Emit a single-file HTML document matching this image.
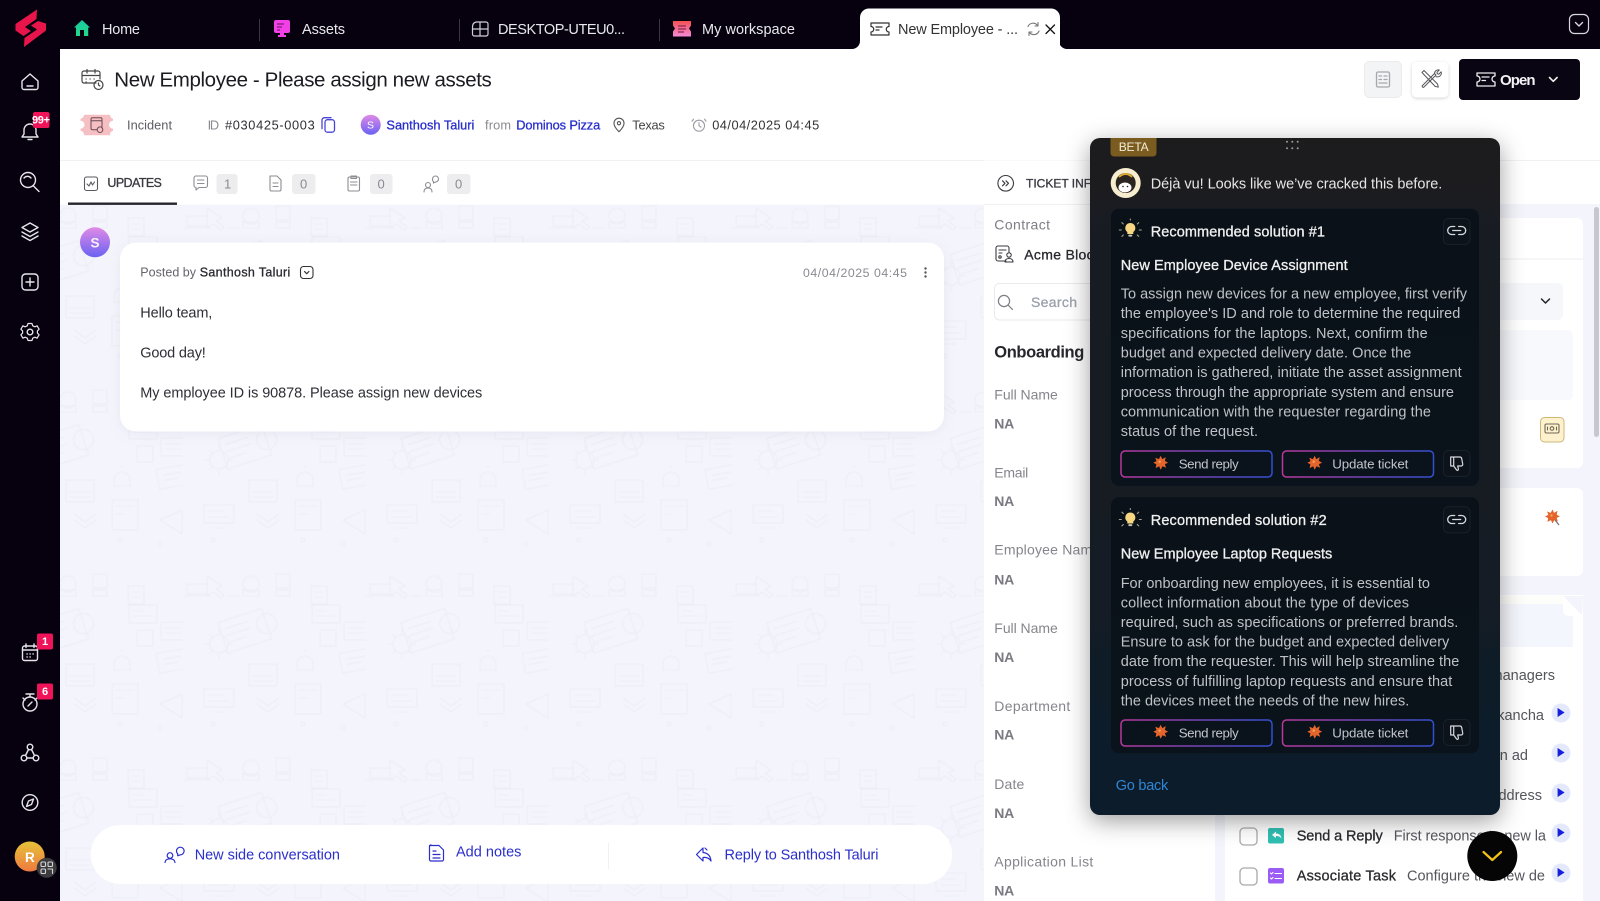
<!DOCTYPE html>
<html lang="en"><head><meta charset="utf-8"><title>New Employee - Please assign new assets</title>
<style>
html,body{margin:0;padding:0;background:#fff;overflow:hidden}
svg{display:block}
text{font-family:"Liberation Sans",sans-serif;white-space:pre}
.m{stroke:currentColor;stroke-width:.3}
.i{fill:none;stroke-linecap:round;stroke-linejoin:round}
</style></head><body>
<svg xmlns="http://www.w3.org/2000/svg" width="1600" height="901" viewBox="0 0 1600 901">
<defs>
<linearGradient id="gb" x1="0" y1="0" x2="1" y2="0"><stop offset="0" stop-color="#b8399c"/><stop offset="1" stop-color="#3350d0"/></linearGradient>
<linearGradient id="pg" x1="0" y1="0" x2="0" y2="1"><stop offset="0" stop-color="#1b1c1f"/><stop offset=".55" stop-color="#141b24"/><stop offset="1" stop-color="#0e1b2b"/></linearGradient>
<linearGradient id="cg" x1="0" y1="0" x2="0" y2="1"><stop offset="0" stop-color="#0a1118"/><stop offset="1" stop-color="#0a121b"/></linearGradient>
<linearGradient id="av" x1="0" y1="0" x2="0" y2="1"><stop offset="0" stop-color="#e08ae6"/><stop offset="1" stop-color="#6a62f2"/></linearGradient>
<linearGradient id="rv" x1="0" y1="0" x2="0" y2="1"><stop offset="0" stop-color="#e6c238"/><stop offset="1" stop-color="#ee7a40"/></linearGradient>
<linearGradient id="hm" x1="0" y1="0" x2="0" y2="1"><stop offset="0" stop-color="#18c9a0"/><stop offset="1" stop-color="#25d98a"/></linearGradient>
<linearGradient id="wk" x1="0" y1="0" x2="0" y2="1"><stop offset="0" stop-color="#f5504f"/><stop offset="1" stop-color="#f58ad8"/></linearGradient>
<filter id="sh" x="-15%" y="-15%" width="130%" height="130%"><feDropShadow dx="0" dy="6" stdDeviation="12" flood-color="#000" flood-opacity=".38"/></filter>
<filter id="ss" x="-10%" y="-20%" width="120%" height="140%"><feDropShadow dx="0" dy="2" stdDeviation="6" flood-color="#7b80a8" flood-opacity=".13"/></filter>
<filter id="sb" x="-30%" y="-30%" width="160%" height="160%"><feDropShadow dx="0" dy="1" stdDeviation="1.5" flood-color="#000" flood-opacity=".18"/></filter>
<filter id="bl"><feGaussianBlur stdDeviation=".5"/></filter>
<pattern id="bgp" x="0" y="0" width="183" height="184" patternUnits="userSpaceOnUse">
<g fill="none" stroke="#ebecf5" stroke-width="1.100">
<path d="M24 24v20l6-4 8 6 3-3-8-6 6-3z M44 44h12"/>
<rect x="4" y="32" width="20" height="10"/><path d="M0 44h28"/>
<circle cx="68" cy="32" r="8"/><path d="M60 44h16v-6h-16z"/>
<rect x="93" y="22" width="14" height="14"/><rect x="93" y="38" width="14" height="6"/>
<rect x="128" y="34" width="16" height="18"/><path d="M132 40h8M132 45h8"/>
<rect x="129" y="53" width="28" height="18"/><path d="M133 59h10M133 64h18"/>
<g transform="rotate(-18 70 75)"><rect x="38" y="60" width="46" height="32"/><path d="M43 68h24M43 75h24M43 82h18"/><circle cx="84" cy="76" r="10"/></g>
<circle cx="36" cy="92" r="9"/><path d="M36 77v5M36 102v5M22 92h5M45 92h5M26 82l4 4M46 82l-4 4M26 102l4-4M46 102l-4-4"/>
<rect x="137" y="78" width="16" height="16"/><rect x="161" y="70" width="24" height="18"/><path d="M165 76h16M165 81h16"/>
<g transform="rotate(-10 160 112)"><rect x="158" y="101" width="30" height="20"/><path d="M163 108h20M163 113h16"/></g>
<path d="M114 112a8 8 0 1 1 16 0v6h-16z M122 100v-3"/>
<rect x="66" y="112" width="28" height="22"/><path d="M70 124h20M70 129h20"/>
<rect x="112" y="132" width="26" height="30"/><path d="M116 138h18M116 146h8"/>
<rect x="21" y="137" width="30" height="18"/><path d="M26 143h16M26 149h20M30 160h12"/>
<path d="M74 146l11 8 11-8M74 152l11 8 11-8"/>
<path d="M160 152l22-10v24z"/>
<circle cx="30" cy="172" r="2"/><circle cx="120" cy="172" r="2"/><circle cx="160" cy="176" r="2"/>
</g>
</pattern>
<g id="spl"><path d="M0-7l1.600 3.400L5-5.600l-.8 3.800L7.400 0 4.200 1.400 5.400 5 1.800 3.600 0 7l-1.600-3.400L-5 5.400l.6-3.800L-7.400 0l3.200-1.600L-5.400-5l3.600 1.400z" fill="#e4652b"/><circle cx="-1" cy="-1" r="1.200" fill="#f4a15c"/></g>
<g id="bulb"><path d="M0-7a5 5 0 0 1 3 9v2h-6V2a5 5 0 0 1 3-9z" fill="#f6d680"/><rect x="-2" y="4.600" width="4" height="2" rx="1" fill="#c9c4b0"/><path d="M-9 0h-2M9 0h2M-7-6l-1.400-1.400M7-6l1.400-1.400M-7 5l-1.400 1.400M7 5l1.400 1.400M0-10v-1" stroke="#a8a28c" stroke-width="1.100" class="i"/></g>
<g id="link"><path d="M-2-4h-3a4 4 0 0 0 0 8h3M2-4h3a4 4 0 0 1 0 8H2M-4 0h8" class="i" stroke="#d7d9dd" stroke-width="1.300"/></g>
<g id="thumb"><path d="M-6-6H3a2 2 0 0 1 2 1.600L6 1a1.600 1.600 0 0 1-1.600 2H1l.7 3c.2 1-1 1.800-1.800 1L-3 3H-6z M-3-6V3" class="i" stroke="#d7d9dd" stroke-width="1.200"/></g>
<g id="play"><circle r="9.500" fill="#e4e8fb"/><path d="M-3.400-5v9l7-4.500z" fill="#1620dc"/></g>
</defs>

<!-- page canvas -->
<rect width="1600" height="901" fill="#fff"/>
<rect x="60" y="204.700" width="924" height="697" fill="#f4f5fc"/>
<rect x="60" y="204.700" width="924" height="697" fill="url(#bgp)" filter="url(#bl)"/>
<path d="M60 160.500H1600" stroke="#f1f1f4"/>

<!-- top bar -->
<rect width="1600" height="49" fill="#07010f"/>
<path d="M851 49h1a8 8 0 0 0 8-8V49zM1068 49h-1a8 8 0 0 1-8-8V49z" fill="#fff"/>
<g fill="#e8e8ec" font-size="14.500">
<text x="102" y="33.800" textLength="38">Home</text>
<text x="302" y="33.800" textLength="43">Assets</text>
<text x="498" y="33.800" textLength="127">DESKTOP-UTEU0...</text>
<text x="702" y="33.800" textLength="93">My workspace</text>
</g>
<path d="M259.500 19v22M459.500 19v22M659.500 19v22" stroke="#3a3542"/>
<g transform="translate(0,-1)">
<path d="M82 21l8 7.500h-1.800V37H76V28.500H74z" fill="url(#hm)"/><rect x="80" y="31" width="4" height="6" fill="#07010f"/>
<rect x="274" y="21" width="16" height="13" rx="2" fill="#f23fe6"/><path d="M277 25h7M277 28h5M277 31h3" stroke="#7d1f79" stroke-width="1.200"/><path d="M280 34h4v2h2v2h-8v-2h2z" fill="#f23fe6"/>
<g class="i" stroke="#cfcfd6" stroke-width="1.200"><path d="M472.500 28v7a2 2 0 0 0 2 2h11.500a2 2 0 0 0 2-2V25a2 2 0 0 0-2-2H476q-3.500 1-3.500 5zM472.500 30h15.500M480 23v14"/></g>
<path d="M673 22h18v4.500l-2 3 2 3v5h-18v-5l2-3-2-3z" fill="url(#wk)"/><path d="M678 27h8M678 30h8M678 33h6" stroke="#8a2a50" stroke-width="1.200"/>
</g>
<rect x="860" y="8.500" width="200" height="44" rx="9" fill="#fff"/>
<rect x="860" y="30" width="200" height="22" fill="#fff"/>
<path d="M871 23h18v3.500a2.500 2.500 0 0 0 0 5.500V35h-18v-3a2.500 2.500 0 0 0 0-5.500z M876 27h6M876 30h3" class="i" stroke="#333" stroke-width="1.200"/>
<text x="898" y="33.800" font-size="14.500" fill="#333" textLength="120">New Employee - ...</text>
<g transform="translate(0,-1)">
<path d="M1028 27.500a5.500 5.500 0 0 1 9.500-1M1039 32a5.500 5.500 0 0 1-9.500 1.500M1038 23.500v3.500h-3M1029 36.500V33h3" class="i" stroke="#777" stroke-width="1.100"/>
<path d="M1046 26l8.500 8.500M1054.500 26l-8.500 8.500" stroke="#111" stroke-width="1.300" stroke-linecap="round"/>
</g>
<rect x="1569.500" y="14.500" width="19" height="19" rx="5" fill="none" stroke="#d8d8de" stroke-width="1.200"/>
<path d="M1575.500 22.500l3.500 3.500 3.500-3.500" class="i" stroke="#d8d8de" stroke-width="1.400"/>

<!-- sidebar -->
<rect y="0" width="60" height="901" fill="#07010f"/>
<path d="M37 9.500L15.500 24v6.500l8 5.500 7.500-5-6-4 11.500-8zM46 23.500v7L24 47l.5-9 12.500-8.500-6-4 7-4.500z" fill="#e8154b"/>
<g class="i" stroke="#e6e6ea" stroke-width="1.400">
<path d="M22 81l8-7 8 7v6.500a2 2 0 0 1-2 2H24a2 2 0 0 1-2-2z M27 86h6"/>
<path d="M30 124a6 6 0 0 1 6 6v4l2 3H22l2-3v-4a6 6 0 0 1 6-6zM28 139.500h4"/>
<circle cx="28" cy="180" r="7.500"/><path d="M33.500 186l5.500 5.500M24 178a4.500 4.500 0 0 1 7 0"/>
<path d="M30 223l8 4.500-8 4.500-8-4.500zM22 232l8 4.500 8-4.500M22 236l8 4.500 8-4.500"/>
<rect x="22" y="274" width="16" height="16" rx="3.500"/><path d="M30 278v8M26 282h8"/>
<path d="M28 323.500h4l.7 2.300 2.200 1 2.200-1 2 3.400-1.700 1.700v2.200l1.700 1.700-2 3.400-2.200-1-2.200 1-.7 2.300h-4l-.7-2.300-2.200-1-2.200 1-2-3.400 1.700-1.700v-2.200l-1.700-1.700 2-3.400 2.200 1 2.200-1z" stroke-width="1.200"/><circle cx="30" cy="332" r="2.800"/>
<rect x="22.500" y="646" width="15" height="14.500" rx="2"/><path d="M22.500 650h15M26 644v3.500M34 644v3.500M27 654h.2M30 654h.2M33 654h.2M27 657h.2M30 657h.2"/>
<circle cx="30" cy="704" r="7"/><path d="M26 694h8M30 694v3M28 706l4-4M23 698l2 2M37 698l-2 2"/>
<circle cx="30" cy="747" r="2.800"/><circle cx="24" cy="758" r="2.800"/><circle cx="36" cy="758" r="2.800"/><path d="M27 758h6M28.500 749.500l-3 6M31.500 749.500l3 6"/>
<circle cx="30" cy="802.500" r="7.800"/><path d="M33.500 799l-2 5.500-5 2 2-5.500z"/>
</g>
<rect x="33" y="112" width="16.500" height="16" rx="2" fill="#f0135a"/><text x="32" y="123.500" font-size="11" fill="#fff" font-weight="700" textLength="18">99+</text>
<rect x="37" y="633.500" width="16" height="16" rx="2" fill="#f0135a"/><text x="42" y="645" font-size="11" fill="#fff" font-weight="700">1</text>
<rect x="37" y="683.500" width="16" height="16" rx="2" fill="#f0135a"/><text x="42" y="695" font-size="11" fill="#fff" font-weight="700">6</text>
<circle cx="29.700" cy="856.500" r="15" fill="url(#rv)"/><text x="25" y="862" font-size="13.500" fill="#fff" font-weight="700">R</text>
<circle cx="46.700" cy="867.700" r="10" fill="#3c3c3e"/>
<g class="i" stroke="#d5d5d8" stroke-width="1.100"><rect x="41" y="862" width="4.500" height="4.500" rx="1"/><rect x="48" y="862" width="4.500" height="4.500" rx="1"/><rect x="41" y="869" width="4.500" height="4.500" rx="1"/><path d="M48 869h4.500v4.500"/></g>

<!-- header -->
<g class="i" stroke="#444" stroke-width="1.200" transform="translate(0,-2)"><path d="M96 85H84a2 2 0 0 1-2-2V75a2 2 0 0 1 2-2h14a2 2 0 0 1 2 2v6M82 77.500h18M87 71.500v3.500M95 71.500v3.500M86 81h.2M90 81h.2M94 81h.2M86 84h.2"/><circle cx="98.500" cy="87" r="4.500"/><path d="M98.500 85v2l1.400 1"/></g>
<text x="114.300" y="86.500" font-size="20.500" fill="#1b1b22" textLength="377.500">New Employee - Please assign new assets</text>
<g transform="translate(0,-4.300)">
<path d="M84 119h26a4 4 0 0 0 3 4v2a4 4 0 0 0 0 8v2a4 4 0 0 0-3 4.500H84a4 4 0 0 0-3.500-4.500v-2a4 4 0 0 0 0-8v-2a4 4 0 0 0 3.500-4z" fill="#f5bfc4"/>
<g class="i" stroke="#6b4a4e" stroke-width="1"><rect x="91" y="122" width="11" height="12" rx="1.500"/><path d="M91 125h11"/><circle cx="100" cy="134" r="2.800" fill="#f5bfc4"/></g>
<g font-size="12.800">
<text x="127" y="134" fill="#5c5c64" textLength="45">Incident</text>
<text x="207.600" y="134" fill="#8a8a92" textLength="11.500">ID</text>
<text x="225" y="134" fill="#2e2e36" textLength="89.700">#030425-0003</text>
<text x="386.400" y="134" fill="#2a2fcb" textLength="88" class="m" style="color:#2a2fcb">Santhosh Taluri</text>
<text x="485" y="134" fill="#8a8a92" textLength="26">from</text>
<text x="516.200" y="134" fill="#2a2fcb" textLength="84" class="m" style="color:#2a2fcb">Dominos Pizza</text>
<text x="632.300" y="134" fill="#444" textLength="32.500">Texas</text>
<text x="712.200" y="134" fill="#333" textLength="107">04/04/2025 04:45</text>
</g>
<g class="i" stroke="#4a44d8" stroke-width="1.300"><rect x="325" y="124" width="9.500" height="12.500" rx="2.500"/><path d="M322 133v-9a3 3 0 0 1 3-2h6"/></g>
<circle cx="370.700" cy="129" r="10" fill="url(#av)"/><text x="367" y="133" font-size="10.500" fill="#fff">S</text>
<g class="i" stroke="#555" stroke-width="1.100"><path d="M619 136s-5-4.500-5-8.500a5 5 0 0 1 10 0c0 4-5 8.500-5 8.500z"/><circle cx="619" cy="127.500" r="1.600"/></g>
<g class="i" stroke="#9a9aa2" stroke-width="1.100"><circle cx="699" cy="130" r="5.500"/><path d="M699 127v3l2 1.500M693.500 123.500l-1.500 2M704.500 123.500l1.500 2"/></g>
</g>

<!-- header buttons -->
<rect x="1364.500" y="61.500" width="37" height="36" rx="5" fill="#f3f4f6" stroke="#ebebee"/>
<g class="i" stroke="#a5a7ac" stroke-width="1.300"><rect x="1376.500" y="72" width="13" height="15" rx="1.500"/><path d="M1379 76h2.500M1384 76h3M1379 79.500h2.500M1384 79.500h3M1379 83h8"/></g>
<rect x="1412" y="62" width="36.500" height="35.500" rx="5" fill="#fff" filter="url(#sb)"/>
<g class="i" stroke="#55555b" stroke-width="1"><path d="M1422.500 85.500l12-12 1.500 1.500-12 12a1 1 0 0 1-1.500-1.500zM1434.500 73.500a3.800 3.800 0 0 1 4.800-3.500l-2.300 2.300.3 1.500 1.500.3 2.300-2.300a3.800 3.800 0 0 1-5 4.800M1422 72.500l2-2 13.500 13.500.8 3.200-3.200-.8z"/></g>
<rect x="1459" y="59" width="121" height="41" rx="4" fill="#0a0512"/>
<path d="M1477 73h18v3a3 3 0 0 0 0 6v4h-18v-4a3 3 0 0 0 0-6z M1482 77h7M1482 80.500h3.500" class="i" stroke="#eee" stroke-width="1.300"/>
<text x="1500" y="85" font-size="15" fill="#f3f3f5" font-weight="700" textLength="35.500">Open</text>
<path d="M1549.500 77.500l3.800 3.800 3.800-3.800" class="i" stroke="#eee" stroke-width="1.600"/>

<!-- updates tabs -->
<g transform="translate(0,-6)">
<g class="i" stroke="#5a5a60" stroke-width="1.100">
<rect x="84.500" y="183" width="13" height="13.500" rx="2"/><path d="M87 190l2 2 2-4 1.500 3 2-3"/>
</g>
<text x="107.400" y="193" font-size="12.500" fill="#3a3a42" textLength="54.500" class="m" style="color:#3a3a42">UPDATES</text>
<g class="i" stroke="#8c8c92" stroke-width="1.100">
<path d="M194 184a2 2 0 0 1 2-2h9.500a2 2 0 0 1 2 2v7.500a2 2 0 0 1-2 2H199l-3 2.500v-2.500a2 2 0 0 1-2-2zM197.500 186h6.500M197.500 189.500h6.500"/>
<path d="M270 182h7l4 4v9.500a1.500 1.500 0 0 1-1.500 1.500H271.500a1.500 1.500 0 0 1-1.500-1.500zM273 189h5M273 192.500h5"/>
<rect x="348" y="183" width="11.500" height="14" rx="1.500"/><path d="M351 182h5.500v2.500H351zM350.500 188h6.500M350.500 191h6.500"/>
<circle cx="428" cy="191" r="2.500"/><path d="M424 198c0-2.500 1.500-4 4-4s4 1.500 4 4"/><path d="M432.500 185a3 3 0 1 1 3 3l-2 1v-1.300a3 3 0 0 1-1-2.700z"/>
</g>
<g fill="#ededef"><rect x="216.500" y="180" width="21" height="20" rx="3"/><rect x="292" y="180" width="23.500" height="20" rx="3"/><rect x="370" y="180" width="22.500" height="20" rx="3"/><rect x="447" y="180" width="23.500" height="20" rx="3"/></g>
<g font-size="13" fill="#8a8a90"><text x="224" y="194.500">1</text><text x="300" y="194.500">0</text><text x="377.500" y="194.500">0</text><text x="455" y="194.500">0</text></g>
</g>
<rect x="68" y="202.500" width="109" height="2.400" fill="#26262c"/>

<!-- message -->
<rect x="120" y="242.500" width="824" height="189" rx="16" fill="#fff" filter="url(#ss)"/>
<circle cx="95" cy="242.300" r="15" fill="url(#av)"/><text x="90.500" y="247.500" font-size="13.500" fill="#fff" font-weight="700" opacity=".9">S</text>
<text x="140.300" y="276.700" font-size="12.500" fill="#63636b" textLength="55.700">Posted by</text>
<text x="199.700" y="276.700" font-size="12.500" fill="#2a2a30" textLength="90.600" class="m" style="color:#2a2a30">Santhosh Taluri</text>
<rect x="300.500" y="266.500" width="12.500" height="12" rx="3" fill="none" stroke="#333" stroke-width="1.100"/>
<path d="M304.500 271.500l2.200 2.200 2.200-2.200" class="i" stroke="#333" stroke-width="1.200"/>
<text x="803" y="277" font-size="12.300" fill="#8a8a90" textLength="104">04/04/2025 04:45</text>
<g fill="#555"><circle cx="925.500" cy="268.500" r="1.200"/><circle cx="925.500" cy="272.500" r="1.200"/><circle cx="925.500" cy="276.500" r="1.200"/></g>
<g font-size="14.500" fill="#2e2e36">
<text x="140.300" y="317.300" textLength="72">Hello team,</text>
<text x="140.300" y="357.300" textLength="65.500">Good day!</text>
<text x="140.300" y="397.300" textLength="342">My employee ID is 90878. Please assign new devices</text>
</g>

<!-- bottom action bar -->
<rect x="90.700" y="825" width="861.500" height="59" rx="29.500" fill="#fff"/>
<path d="M608.500 843v26" stroke="#f1f1f4"/>
<g class="i" stroke="#2a2fcb" stroke-width="1.200">
<circle cx="170" cy="855.500" r="2.800"/><path d="M165 862.500c.3-2.700 2.200-3.700 5-3.700s4.700 1 5 3.700"/><path d="M176.500 851a3.800 3.800 0 1 1 3.800 3.800l-2.600 1v-2a3.800 3.800 0 0 1-1.200-2.800z"/>
<path d="M429.500 845.500h9.500l4.500 4.500v9.500a1.500 1.500 0 0 1-1.500 1.500h-11a1.500 1.500 0 0 1-1.500-1.500v-13a1.500 1.500 0 0 1 1.500-1.500zM433 851h3M433 854.500h7M433 858h7"/>
<path d="M703 848l-6.500 6.500 6.500 6.500v-3.500c3.500-.5 6 .5 8 3.500-.5-5-3-8-8-8.500zM707 850l-2-2"/>
</g>
<g font-size="14.500" fill="#2a2fcb">
<text x="194.700" y="859.300" textLength="145.300">New side conversation</text>
<text x="456" y="856.500" textLength="65.400">Add notes</text>
<text x="724.500" y="859.300" textLength="154">Reply to Santhosh Taluri</text>
</g>

<!-- ticket info panel -->
<rect x="984" y="160.500" width="231" height="741" fill="#fff"/>
<path d="M984 204.500h231" stroke="#f1f1f4"/>
<circle cx="1005.700" cy="183.300" r="7.800" fill="none" stroke="#3a3a40" stroke-width="1.100"/>
<path d="M1002.500 180.800l2.500 2.500-2.500 2.500M1006 180.800l2.500 2.500-2.500 2.500" class="i" stroke="#3a3a40" stroke-width="1.100"/>
<text x="1026" y="187.700" font-size="12" fill="#3a3a42" class="m" style="color:#3a3a42">TICKET INFORMATION</text>
<text x="994.300" y="229.300" font-size="14" fill="#7d7d85" textLength="55.700">Contract</text>
<g class="i" stroke="#3a3a42" stroke-width="1.100"><path d="M1006 261H998a2 2 0 0 1-2-2v-11a2 2 0 0 1 2-2h9a2 2 0 0 1 2 2v4M999 250h7M999 253h3"/><circle cx="1000" cy="257" r="1.200"/><circle cx="1009" cy="255" r="2.200"/><path d="M1005 262c0-2.500 2-3.500 4-3.500s4 1 4 3.500z"/></g>
<text x="1024.300" y="259.300" font-size="14" fill="#26262c" class="m" letter-spacing=".3" style="color:#26262c">Acme Blockchain</text>
<rect x="994.500" y="283.500" width="180" height="36.500" rx="5" fill="#fff" stroke="#eaeaee"/>
<circle cx="1004" cy="301" r="5.600" fill="none" stroke="#7d7d85" stroke-width="1.200"/><path d="M1008 305l4.500 4.500" stroke="#7d7d85" stroke-width="1.200" stroke-linecap="round"/>
<text x="1031" y="306.800" font-size="14" fill="#9ba1ab" textLength="46" class="m" style="color:#9ba1ab">Search</text>
<text x="994.300" y="357.700" font-size="16.500" fill="#26262c" font-weight="700" textLength="90">Onboarding</text>
<g font-size="14" fill="#85858d">
<text x="994.300" y="399.300" textLength="63.500">Full Name</text>
<text x="994.300" y="477.300" textLength="34">Email</text>
<text x="994.300" y="554.500" letter-spacing=".2">Employee Name</text>
<text x="994.300" y="633" textLength="63.500">Full Name</text>
<text x="994.300" y="711" textLength="76">Department</text>
<text x="994.300" y="789" textLength="30">Date</text>
<text x="994.300" y="866.700" textLength="99">Application List</text>
</g>
<g font-size="14" fill="#7a7a82" font-weight="700">
<text x="994.300" y="428.300" textLength="20">NA</text><text x="994.300" y="506" textLength="20">NA</text><text x="994.300" y="584.400" textLength="20">NA</text><text x="994.300" y="662" textLength="20">NA</text><text x="994.300" y="739.500" textLength="20">NA</text><text x="994.300" y="818" textLength="20">NA</text><text x="994.300" y="895.600" textLength="20">NA</text>
</g>

<!-- right column -->
<rect x="1215" y="204" width="385" height="697" fill="#f4f5fc"/>
<rect x="1225" y="218" width="358" height="250" rx="6" fill="#fff"/>
<path d="M1225 259h358" stroke="#eeeef2"/>
<rect x="1240" y="283" width="323" height="37" rx="5" fill="#f6f7fb"/>
<path d="M1541.500 299l4 4 4-4" class="i" stroke="#222" stroke-width="1.500"/>
<rect x="1240" y="330" width="333" height="70" rx="5" fill="#f8f9fd"/>
<rect x="1540.500" y="417.500" width="23.500" height="24.500" rx="4" fill="#fdf2cd" stroke="#cdb87a"/>
<g class="i" stroke="#6e6857" stroke-width="1.100"><rect x="1545" y="424" width="14" height="9" rx="1.500"/><circle cx="1552" cy="428.500" r="1.800"/><path d="M1547.500 427v3M1556.500 427v3"/></g>
<rect x="1225" y="488" width="358" height="88" rx="6" fill="#fff"/>
<use href="#spl" x="1552.500" y="516.500"/><path d="M1555 520l4 5" stroke="#777" stroke-width="1.300"/>
<rect x="1225" y="595" width="358" height="306" fill="#fff"/>
<rect x="1240" y="604" width="333" height="43" fill="#f4f6fd"/>
<rect x="1240" y="596" width="323" height="8" fill="#fdfdf9"/>
<path d="M1563 596h20l-1 20h-14z" fill="#f4f5fc"/><path d="M1563 596v14a6 6 0 0 0 6 6h14z" fill="#fff"/>
<g font-size="14.500" fill="#55555d">
<text x="1555" y="680" text-anchor="end">Notify all managers</text>
<text x="1544" y="720" text-anchor="end">Approve with Akancha</text>
<text x="1528" y="760" text-anchor="end">Create an ad</text>
<text x="1542" y="800" text-anchor="end">Confirm email address</text>
<text x="1393.700" y="840.700" textLength="152.300">First response to new la</text>
<text x="1407" y="880.700" textLength="138">Configure the new de</text>
</g>
<g font-size="14.500" fill="#2a2a30" class="m" style="color:#2a2a30">
<text x="1296.700" y="840.700" textLength="86">Send a Reply</text>
<text x="1296.700" y="880.700" textLength="99.300">Associate Task</text>
</g>
<rect x="1240" y="828" width="17" height="17" rx="4" fill="#fff" stroke="#a9a9ad" stroke-width="1.300"/>
<rect x="1240" y="868" width="17" height="17" rx="4" fill="#fff" stroke="#a9a9ad" stroke-width="1.300"/>
<rect x="1268" y="828" width="16" height="15.500" rx="2" fill="#2fbfb2"/><path d="M1272 835l4-3.500v2c3 0 5 1.500 5.500 5-1.500-2-3-2.500-5.500-2.500v2z" fill="#fff"/>
<rect x="1268" y="868" width="16" height="15.500" rx="2" fill="#9b5cf5"/><path d="M1270.500 873l1 1 1.500-1.500M1270.500 878l1 1 1.500-1.500M1275 873.500h6.500M1275 878.500h6.500" class="i" stroke="#fff" stroke-width="1.100"/>
<use href="#play" x="1561" y="713"/><use href="#play" x="1561" y="753"/><use href="#play" x="1561" y="793"/><use href="#play" x="1561" y="833"/><use href="#play" x="1561" y="873"/>
<rect x="1594" y="207" width="5" height="230" rx="2.500" fill="#c6c8d0"/>

<!-- beta panel -->
<rect x="1090" y="138" width="410" height="677" rx="10" fill="url(#pg)" filter="url(#sh)"/>
<path d="M1110.500 138h46v15a3.500 3.500 0 0 1-3.500 3.500h-39a3.500 3.500 0 0 1-3.500-3.500z" fill="#7a5c20"/>
<text x="1118.700" y="151" font-size="12" fill="#f4ecd4" textLength="30">BETA</text>
<g fill="#9a9a9e"><circle cx="1287" cy="141.700" r="1"/><circle cx="1292.300" cy="141.700" r="1"/><circle cx="1297.700" cy="141.700" r="1"/><circle cx="1287" cy="148.300" r="1"/><circle cx="1292.300" cy="148.300" r="1"/><circle cx="1297.700" cy="148.300" r="1"/></g>
<circle cx="1125.700" cy="183" r="15" fill="#f7eed0"/>
<circle cx="1125.700" cy="183" r="10" fill="#2a2520"/><path d="M1119 177q7-6 13 0" fill="none" stroke="#e0ac30" stroke-width="1.800"/>
<ellipse cx="1125" cy="187.500" rx="6.500" ry="5" fill="#fff"/><circle cx="1123" cy="186.500" r=".8" fill="#222"/><circle cx="1127.500" cy="186.500" r=".8" fill="#222"/>
<text x="1150.700" y="188.300" font-size="14.500" fill="#e6e6e6" textLength="291.600">Déjà vu! Looks like we’ve cracked this before.</text>

<!-- solution 1 -->
<rect x="1111" y="208.700" width="368" height="277" rx="8" fill="url(#cg)"/>
<use href="#bulb" x="1130.300" y="230"/>
<text x="1150.700" y="236.700" font-size="14.500" fill="#f0f0f0" textLength="174.300" class="m" style="color:#f0f0f0">Recommended solution #1</text>
<rect x="1443.500" y="218.500" width="26.500" height="26" rx="5" fill="#0c131b" stroke="#182029"/>
<use href="#link" x="1456.700" y="230.500"/>
<text x="1120.700" y="270" font-size="14.500" fill="#f0f0f0" textLength="227" class="m" style="color:#f0f0f0">New Employee Device Assignment</text>
<g font-size="14.500" fill="#bfc2c6">
<text x="1120.700" y="298.500" textLength="346.300">To assign new devices for a new employee, first verify</text>
<text x="1120.700" y="318" textLength="339.600">the employee's ID and role to determine the required</text>
<text x="1120.700" y="338" textLength="307">specifications for the laptops. Next, confirm the</text>
<text x="1120.700" y="357.500" textLength="290.600">budget and expected delivery date. Once the</text>
<text x="1120.700" y="377" textLength="341">information is gathered, initiate the asset assignment</text>
<text x="1120.700" y="397" textLength="333.300">process through the appropriate system and ensure</text>
<text x="1120.700" y="416.500" textLength="310.300">communication with the requester regarding the</text>
<text x="1120.700" y="436" textLength="137.300">status of the request.</text>
</g>
<rect x="1121" y="451" width="151" height="26" rx="4" fill="none" stroke="url(#gb)" stroke-width="1.500"/>
<rect x="1282.500" y="451" width="151" height="26" rx="4" fill="none" stroke="url(#gb)" stroke-width="1.500"/>
<use href="#spl" x="1160.700" y="462.700"/><use href="#spl" x="1314.700" y="462.700"/>
<g font-size="13.300" fill="#c3c6cb">
<text x="1178.700" y="468.300" textLength="60">Send reply</text>
<text x="1332.300" y="468.300" textLength="76">Update ticket</text>
</g>
<rect x="1443.500" y="450.500" width="26.500" height="26" rx="5" fill="#0c131b" stroke="#182029"/>
<use href="#thumb" x="1456.700" y="463"/>

<!-- solution 2 -->
<rect x="1111" y="497.300" width="368" height="256" rx="8" fill="url(#cg)"/>
<use href="#bulb" x="1130.300" y="519.500"/>
<text x="1150.700" y="525" font-size="14.500" fill="#f0f0f0" textLength="176" class="m" style="color:#f0f0f0">Recommended solution #2</text>
<rect x="1443.500" y="506.800" width="26.500" height="26" rx="5" fill="#0c131b" stroke="#182029"/>
<use href="#link" x="1456.700" y="519.500"/>
<text x="1120.700" y="558.300" font-size="14.500" fill="#f0f0f0" textLength="211.600" class="m" style="color:#f0f0f0">New Employee Laptop Requests</text>
<g font-size="14.500" fill="#bfc2c6">
<text x="1120.700" y="588" textLength="309.300">For onboarding new employees, it is essential to</text>
<text x="1120.700" y="607.500" textLength="288.300">collect information about the type of devices</text>
<text x="1120.700" y="627" textLength="337.600">required, such as specifications or preferred brands.</text>
<text x="1120.700" y="646.500" textLength="328.600">Ensure to ask for the budget and expected delivery</text>
<text x="1120.700" y="666" textLength="338.600">date from the requester. This will help streamline the</text>
<text x="1120.700" y="686" textLength="331.600">process of fulfilling laptop requests and ensure that</text>
<text x="1120.700" y="705.500" textLength="288.600">the devices meet the needs of the new hires.</text>
</g>
<rect x="1121" y="720" width="151" height="26" rx="4" fill="none" stroke="url(#gb)" stroke-width="1.500"/>
<rect x="1282.500" y="720" width="151" height="26" rx="4" fill="none" stroke="url(#gb)" stroke-width="1.500"/>
<use href="#spl" x="1160.700" y="731.700"/><use href="#spl" x="1314.700" y="731.700"/>
<g font-size="13.300" fill="#c3c6cb">
<text x="1178.700" y="737.300" textLength="60">Send reply</text>
<text x="1332.300" y="737.300" textLength="76">Update ticket</text>
</g>
<rect x="1443.500" y="719.500" width="26.500" height="26" rx="5" fill="#0c131b" stroke="#182029"/>
<use href="#thumb" x="1456.700" y="732"/>
<text x="1115.700" y="790" font-size="14.500" fill="#2f86d6" textLength="52.600">Go back</text>

<!-- floating button -->
<circle cx="1492.300" cy="856" r="25" fill="#050505"/>
<path d="M1483.500 852l8.800 8 8.800-8" class="i" stroke="#f3c318" stroke-width="2.200"/>
</svg>
</body></html>
